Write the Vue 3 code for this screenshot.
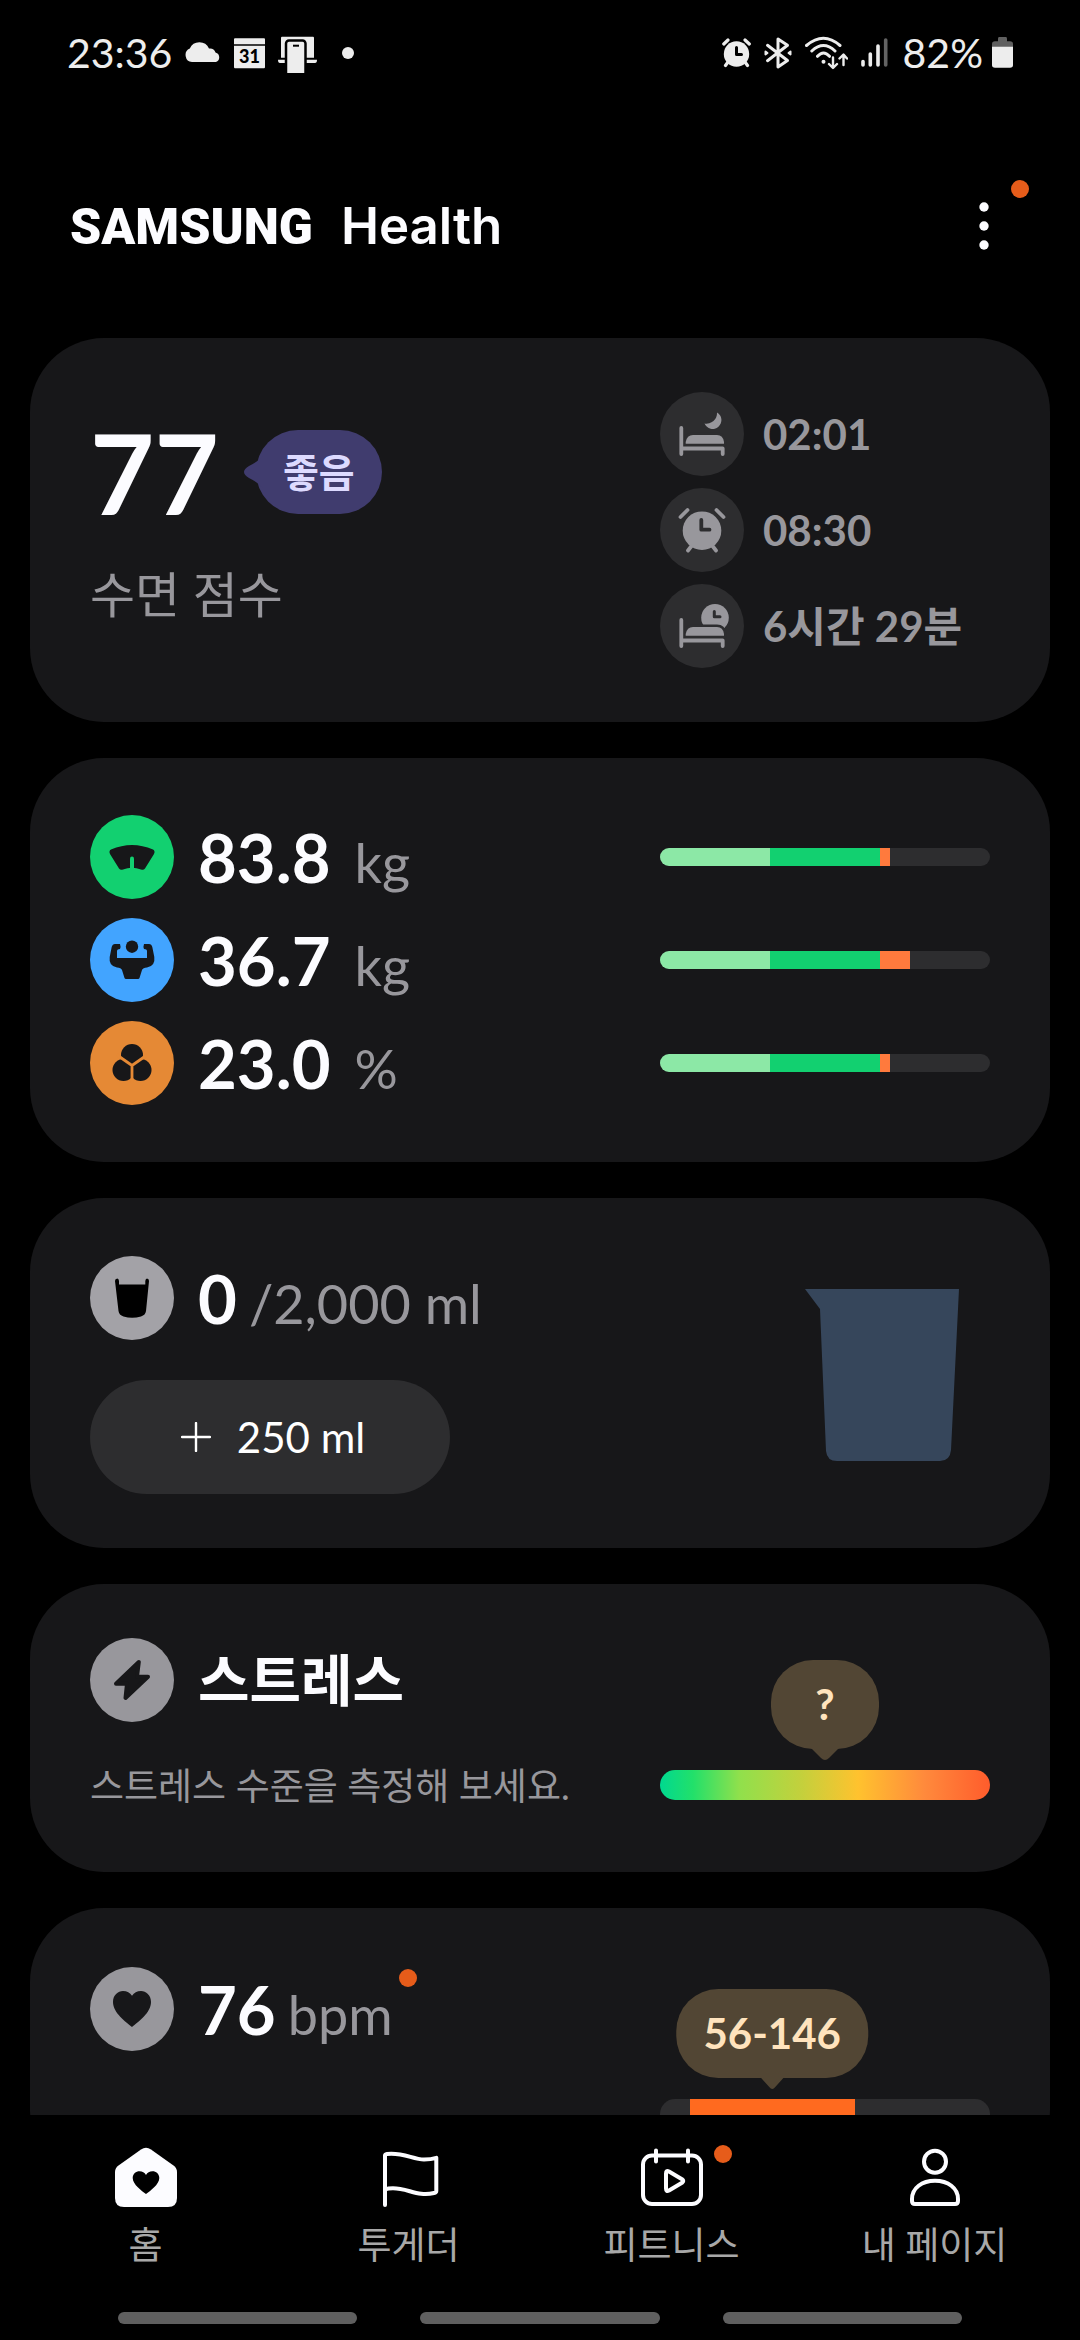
<template>
  <div class="screen" lang="ko">
    <div class="status-bar">
      <div class="status-group">
        <span class="status-text">23:36</span>
        <svg width="36" height="40" viewBox="0 0 36 40" fill="#ededed">
          <path d="M7 29A7 7 0 0 1 4.800 15.600A10.500 10.500 0 0 1 24 15.500A6 6 0 0 1 30.500 19.500A5 5 0 0 1 31 29Z" />
        </svg>
        <svg width="31" height="40" viewBox="0 0 31 40" fill="#ededed">
          <path d="M1 5.300H30Q31 5.300 31 6.300V11.300H0V6.300Q0 5.300 1 5.300ZM0 12.700H31V34Q31 35.300 30 35.300H1Q0 35.300 0 34Z" />
          <text x="15.500" y="30" text-anchor="middle" class="calendar-day">31</text>
        </svg>
        <svg width="39" height="40" viewBox="0 0 39 40" fill="#ededed">
          <path d="M4 3.700H35Q36 3.700 36 5V24.700H3V5Q3 3.700 4 3.700ZM0 26.700H7V30H2Q0 30 0 26.700ZM28 26.700H39Q39 30 37 30H28Z" />
          <rect x="8" y="7.500" width="19.500" height="36" rx="3" stroke="#000" stroke-width="2.500" />
          <path d="M15 12.700H21" stroke="#000" stroke-width="2" />
        </svg>
        <span class="status-more"></span>
      </div>

      <div class="status-group">
        <svg width="29" height="40" viewBox="0 0 29 40" stroke-linecap="round" stroke-linejoin="round">
          <circle cx="14.500" cy="21" r="12.700" fill="#ededed" />
          <path d="M1.800 11L6 7M23 7L27.300 11M6 29L3.500 32.500M23 29L25.500 32.500" fill="none" stroke="#ededed" stroke-width="3.200" />
          <path d="M14.500 14.500V21.500H19.500" fill="none" stroke="#000" stroke-width="3" />
        </svg>
        <svg width="28" height="40" viewBox="0 0 28 40" fill="none" stroke="#ededed" stroke-width="3" stroke-linecap="round" stroke-linejoin="round">
          <path d="M3.500 12.300L23.500 27.500L14 34V6L23.500 12.300L3.500 27.700" />
          <path d="M1.500 18.500L3.500 20L1.500 21.500ZM26.500 18.500L24.500 20L26.500 21.500Z" stroke-width="2" />
        </svg>
        <svg width="43" height="40" viewBox="0 0 43 40" fill="none" stroke="#ededed" stroke-width="3" stroke-linecap="round" stroke-linejoin="round">
          <path d="M1.500 12.500Q18.500 -2 35 12.500M6.800 18Q18.500 7 30 18M12.500 23.300Q18.500 16.500 24.500 23.300" />
          <circle cx="18.500" cy="28.700" r="2" fill="#ededed" stroke="none" />
          <path d="M28 24.500V34.500M24 31L28 35L32 31M38.500 32V22M34.500 25.500L38.500 21.500L42 25.500" stroke-width="2.400" />
        </svg>
        <svg width="27" height="40" viewBox="0 0 27 40" stroke="#ededed" stroke-width="3.600" stroke-linecap="round">
          <path d="M2 28.500V32M9.300 21V32M17 13V32" />
          <path d="M24.700 7V32" stroke="#636363" />
        </svg>
        <div class="battery">
          <span class="status-text">82%</span>
          <svg width="21" height="40" viewBox="0 0 21 40">
            <path d="M7 4H14Q15 4 15 6V8.300H18Q21 8.300 21 11V15H0V11Q0 8.300 3 8.300H6V6Q6 4 7 4Z" fill="#606060" />
            <path d="M0 13.700H21V32Q21 34.700 18 34.700H3Q0 34.700 0 32Z" fill="#ededed" />
          </svg>
        </div>
      </div>
    </div>

    <header class="app-header">
      <h1 class="app-title">
        <span class="brand">SAMSUNG</span>
        <span class="product">Health</span>
      </h1>
      <button class="btn-menu" aria-label="더보기">
        <svg width="10" height="50" viewBox="0 0 10 50" fill="#fcfcff">
          <circle cx="5" cy="6" r="4.700" />
          <circle cx="5" cy="25" r="4.700" />
          <circle cx="5" cy="44" r="4.700" />
        </svg>
        <span class="dot menu-dot"></span>
      </button>
    </header>

    <main class="card-list">
      <section class="card sleep-card">
        <div class="sleep-summary">
          <div class="sleep-score">
            <span class="score">77</span>
            <span class="score-badge">
              <svg class="badge-tail" width="20" height="32" viewBox="0 0 20 32" fill="#403c6e">
                <path d="M20 0Q16 5 6 10Q-4 16 6 22Q16 27 20 32Z" />
              </svg>
              좋음
            </span>
          </div>
          <div class="score-label">수면 점수</div>
        </div>
        <ul class="sleep-times">
          <li v-for="item in sleepTimes" :key="item.icon">
            <span class="icon-circle icon-dark">
              <svg width="84" height="84" viewBox="0 0 84 84" fill="#98979c" stroke-linecap="round" stroke-linejoin="round">
                <template v-if="item.icon === 'alarm'">
                  <circle cx="42" cy="42.700" r="19.300" />
                  <path d="M20.500 29L27.500 22M56.500 22L63.500 29M31.500 58L28 62.500M52.500 58L56 62.500" stroke="#98979c" stroke-width="3.800" />
                  <path d="M41.300 32V41.700H49.500" fill="none" stroke="#2d2d2f" stroke-width="3.800" />
                </template>
                <template v-else>
                  <path v-if="item.icon === 'bed'" d="M57 20.500A8.800 8.800 0 1 1 44.500 31.500A10.500 10.500 0 0 0 57 20.500Z" />
                  <template v-else>
                    <circle cx="55" cy="33.700" r="13.800" />
                    <path d="M54.300 27.500V32.700H60" fill="none" stroke="#2d2d2f" stroke-width="3" />
                  </template>
                  <path d="M25.700 51.700V50Q27 43 33 43H57Q63 43 64 50V51.700Z" stroke="#2d2d2f" stroke-width="5" paint-order="stroke" />
                  <path d="M21.300 36V62M21.300 56.500H62.700V62" fill="none" stroke="#98979c" stroke-width="3.800" />
                </template>
              </svg>
            </span>
            {{ item.text }}
          </li>
        </ul>
      </section>

      <section class="card body-card">
        <div v-for="item in bodyItems" :key="item.icon" class="body-row">
          <div class="metric">
            <span class="icon-circle" :class="`icon-${item.icon}`">
              <svg width="84" height="84" viewBox="0 0 84 84" fill="#171719">
                <template v-if="item.icon === 'weight'">
                  <path d="M21 34.500Q42 25.500 63 34.500Q65.500 36 64 39L55 53.500Q53.500 55.500 51 54.500Q42 51 33 54.500Q30.500 55.500 29 53.500L20 39Q18.500 36 21 34.500Z" />
                  <path d="M42 43.500V54" stroke="#12d070" stroke-width="4" stroke-linecap="round" />
                </template>
                <template v-else-if="item.icon === 'muscle'">
                  <circle cx="42" cy="28.700" r="6.200" />
                  <path d="M25 26H30Q31 28.500 30 31Q26.500 31 27 34V40H57V34Q57.500 31 54 31Q53 28.500 54 26H59Q61.500 26 62.300 29L64.300 39Q65.500 48 57 49.500Q53 49.500 52 52L49.500 60Q49.200 61 48 61H36Q34.800 61 34.500 60L32 52Q31 49.500 27 49.500Q18.500 48 19.700 39L21.700 29Q22.500 26 25 26Z" />
                </template>
                <template v-else>
                  <circle cx="42" cy="34" r="11" />
                  <circle cx="33.500" cy="49" r="11" />
                  <circle cx="50.500" cy="49" r="11" />
                  <path d="M27 34L42 44.500L57 34M42 44.500V62" fill="none" stroke="#e58935" stroke-width="2.800" />
                </template>
              </svg>
            </span>
            <span class="metric-value">{{ item.value }}</span>
            <span class="metric-unit body-unit">{{ item.unit }}</span>
          </div>
          <div class="level-bar">
            <span class="level-low"></span>
            <span class="level-normal"></span>
            <span class="level-over" :style="{ width: item.over + '%' }"></span>
          </div>
        </div>
      </section>

      <section class="card water-card">
        <div>
          <div class="metric">
            <span class="icon-circle icon-water">
              <svg width="84" height="84" viewBox="0 0 84 84">
                <path d="M25 25Q25 22.500 27.300 22.500Q28.800 22.500 29 25V28.500H55.300V25Q55.500 22.500 57 22.500Q59 22.500 59 25L56 55Q55.500 59 51 60.500Q42 63 33.500 60.500Q29 59 28.500 55Z" />
              </svg>
            </span>
            <span class="metric-value">0</span>
            <span class="metric-unit">/2,000 ml</span>
          </div>
          <button class="btn-add">
            <svg width="30" height="30" viewBox="0 0 30 30" stroke="#fff" stroke-width="2.400" stroke-linecap="round">
              <path d="M15 1V29M1 15H29" />
            </svg>
            250 ml
          </button>
        </div>
        <svg class="cup" width="154" height="172" viewBox="0 0 154 172" fill="#36465b">
          <path d="M0 0H154L146 161Q145 172 135 172H32Q22 172 21 162L15 20Z" />
        </svg>
      </section>

      <section class="card stress-card">
        <div>
          <div class="metric">
            <span class="icon-circle icon-gray">
              <svg width="84" height="84" viewBox="0 0 84 84" fill="#171719" stroke="#171719" stroke-width="4" stroke-linejoin="round">
                <path d="M48.800 24L47 38.700H58L35.500 60L37 45.700H26Z" />
              </svg>
            </span>
            <h2 class="card-name">스트레스</h2>
          </div>
          <p class="card-desc">스트레스 수준을 측정해 보세요.</p>
        </div>
        <div class="gauge">
          <span class="bubble bubble-unknown">
            ?
            <svg class="bubble-tail" width="30" height="14" viewBox="0 0 30 14" fill="#524634">
              <path d="M1 0H29L19 10Q15 14 11 10Z" />
            </svg>
          </span>
          <div class="gauge-bar gauge-stress"></div>
        </div>
      </section>

      <section class="card heart-card">
        <div class="metric">
          <span class="icon-circle icon-gray">
            <svg width="84" height="84" viewBox="0 0 84 84" fill="#171719">
              <path d="M42 60C36 55 23 46 23 35C23 28 28 24 33 24C37 24 40 26 42 28.700C44 26 47 24 51 24C56 24 61 28 61 35C61 46 48 55 42 60Z" />
            </svg>
          </span>
          <span class="metric-value">76</span>
          <span class="metric-unit heart-unit">bpm<span class="dot heart-dot"></span></span>
        </div>
        <div class="gauge">
          <span class="bubble" :style="{ left: heartRange.start + heartRange.width / 2 + '%' }">
            56-146
            <svg class="bubble-tail" width="30" height="14" viewBox="0 0 30 14" fill="#524634">
              <path d="M3 0H27L18 10Q15 14 12 10Z" />
            </svg>
          </span>
          <div class="gauge-bar">
            <span class="gauge-range" :style="{ marginLeft: heartRange.start + '%', width: heartRange.width + '%' }"></span>
          </div>
        </div>
      </section>
    </main>

    <nav class="bottom-nav">
      <div class="nav-items">
        <a href="#home" class="nav-item">
          <svg width="64" height="64" viewBox="0 0 64 64">
            <path d="M27 3.500Q32 0 37 3.500L59.500 19.500Q63 22 63 26V52Q63 61 54 61H10Q1 61 1 52V26Q1 22 4.500 19.500Z" fill="#fcfcff" />
            <path d="M32 48C28 45 18.700 38.500 18.700 32C18.700 28 22 25.300 25.500 25.300C28.500 25.300 30.500 26.500 32 29C33.500 26.500 35.500 25.300 38.500 25.300C42 25.300 45.300 28 45.300 32C45.300 38.500 36 45 32 48Z" />
          </svg>
          홈
        </a>
        <a href="#together" class="nav-item">
          <svg class="line-icon" width="64" height="64" viewBox="0 0 64 64">
            <path d="M8 59V9.500Q8 8.200 10 7.900C26 6 36 13.500 47 13.500Q54 13.500 59.300 11.900V45Q59.300 46.500 57 47C41 51 31 42.300 16 42.300Q11 42.300 8 43.500" />
          </svg>
          투게더
        </a>
        <a href="#fitness" class="nav-item">
          <svg class="line-icon" width="64" height="64" viewBox="0 0 64 64">
            <rect x="3" y="9.500" width="58" height="48.500" rx="9" />
            <path d="M16 4.500V15.500M48 4.500V15.500" />
            <path d="M26 27.500V42.500Q26 46 29 44.500L42 36.800Q44.500 35 42 33.200L29 25.500Q26 24 26 27.500Z" />
          </svg>
          <span class="dot nav-dot"></span>
          피트니스
        </a>
        <a href="#mypage" class="nav-item">
          <svg class="line-icon" width="64" height="64" viewBox="0 0 64 64">
            <circle cx="32" cy="15.700" r="11" />
            <path d="M9 53C9 42 19 34.700 32 34.700S55 42 55 53V55Q55 58 52 58H12Q9 58 9 55Z" />
          </svg>
          내 페이지
        </a>
      </div>
      <div class="gesture-hints">
        <span></span>
        <span></span>
        <span></span>
      </div>
    </nav>
  </div>
</template>

<script setup>
const sleepTimes = [
  { icon: 'bed', text: '02:01' },
  { icon: 'alarm', text: '08:30' },
  { icon: 'duration', text: '6시간 29분' }
];

// over: 표준 구간을 넘은 비율 (%)
const bodyItems = [
  { icon: 'weight', value: '83.8', unit: 'kg', over: 3 },
  { icon: 'muscle', value: '36.7', unit: 'kg', over: 9 },
  { icon: 'fat', value: '23.0', unit: '%', over: 3 }
];

const heartRange = { start: 9, width: 50 };
</script>

<style>
body {
  margin: 0;
  background: #000;
}
</style>

<style scoped>
.screen {
  display: flex;
  flex-direction: column;
  height: 100vh;
  overflow: hidden;
  background: #000;
  color: #fcfcff;
  font-family: Lato, "Noto Sans CJK KR", sans-serif;
}

.screen * {
  box-sizing: border-box;
}

svg {
  display: block;
  flex: none;
}

.dot {
  position: absolute;
  width: 18px;
  height: 18px;
  border-radius: 50%;
  background: #e65c1a;
}

/* 상태 표시줄 */
.status-bar {
  display: flex;
  flex: none;
  justify-content: space-between;
  align-items: center;
  height: 106px;
  padding: 0 67px;
  color: #ededed;
}

.status-group {
  display: flex;
  align-items: center;
  gap: 13px;
}

.status-text {
  font-size: 41px;
  line-height: 48px;
}

.status-more {
  width: 12px;
  height: 12px;
  margin-left: 12px;
  border-radius: 50%;
  background: #ededed;
}

.calendar-day {
  font-size: 18px;
  font-weight: 900;
  fill: #000;
}

.battery {
  display: flex;
  align-items: center;
  gap: 9px;
  margin-left: 2px;
}

/* 헤더 */
.app-header {
  display: flex;
  flex: none;
  justify-content: space-between;
  align-items: center;
  height: 232px;
  padding: 8px 72px 0 70px;
}

.app-title {
  display: flex;
  align-items: baseline;
  gap: 28px;
  margin: 0;
  line-height: 60px;
}

.brand {
  font-family: Roboto, sans-serif;
  font-size: 50px;
  font-weight: 900;
}

.product {
  font-family: Inter, sans-serif;
  font-size: 51px;
  font-weight: 600;
}

.btn-menu {
  position: relative;
  display: flex;
  justify-content: center;
  width: 48px;
  padding: 0;
  border: 0;
  background: none;
  cursor: pointer;
}

.menu-dot {
  top: -21px;
  right: -21px;
}

/* 카드 */
.card-list {
  display: flex;
  flex: 1;
  flex-direction: column;
  gap: 36px;
  min-height: 0;
  padding: 0 30px;
  overflow: hidden;
}

.card {
  display: grid;
  flex: none;
  grid-template-columns: 1fr 330px;
  padding: 54px 60px;
  border-radius: 74px;
  background: #171719;
}

.icon-circle {
  flex: none;
  width: 84px;
  height: 84px;
  border-radius: 50%;
}

.icon-dark {
  background: #2d2d2f;
}

.icon-weight {
  background: #12d070;
}

.icon-muscle {
  background: #42a4ff;
}

.icon-fat {
  background: #e58935;
}

.icon-water {
  background: #a3a2a7;
}

.icon-gray {
  background: #98979c;
}

.metric {
  display: flex;
  align-items: baseline;
  height: 84px;
  line-height: 84px;
}

.metric .icon-circle {
  align-self: center;
  margin-right: 24px;
}

.metric-value {
  font-size: 67px;
  font-weight: 700;
}

.metric-unit {
  margin-left: 12px;
  color: #98979c;
  font-size: 54px;
}

.body-unit {
  margin-left: 24px;
}

/* 수면 */
.sleep-card {
  align-items: center;
}

.sleep-score {
  display: flex;
  align-items: center;
  gap: 37px;
  height: 84px;
}

.score {
  font-size: 111px;
  font-weight: 700;
  line-height: 80px;
}

.score-badge {
  position: relative;
  width: 126px;
  height: 84px;
  border-radius: 42px;
  background: #403c6e;
  color: #dddaff;
  font-size: 39px;
  font-weight: 700;
  line-height: 84px;
  text-align: center;
}

.badge-tail {
  position: absolute;
  top: 26px;
  left: -13px;
}

.score-label {
  margin-top: 44px;
  color: #98979c;
  font-size: 49px;
  line-height: 72px;
}

.sleep-times {
  display: flex;
  flex-direction: column;
  gap: 12px;
  margin: 0;
  padding: 0;
  list-style: none;
}

.sleep-times li {
  display: flex;
  align-items: center;
  gap: 19px;
  height: 84px;
  color: #98979c;
  font-size: 42px;
  font-weight: 700;
  line-height: 84px;
  white-space: nowrap;
}

/* 체성분 */
.body-card {
  row-gap: 19px;
  padding: 57px 60px;
}

.body-row {
  display: grid;
  grid-column: 1 / -1;
  grid-template-columns: subgrid;
  align-items: center;
}

.level-bar {
  display: flex;
  height: 18px;
  overflow: hidden;
  border-radius: 9px;
  background: #2d2d2f;
}

.level-low,
.level-normal {
  width: 33.333%;
}

.level-low {
  background: #8ce8a6;
}

.level-normal {
  background: #12d070;
}

.level-over {
  background: #ff7a3d;
}

/* 물 */
.water-card {
  align-items: center;
  padding-top: 58px;
}

.btn-add {
  display: flex;
  justify-content: center;
  align-items: center;
  gap: 26px;
  width: 360px;
  height: 114px;
  margin-top: 40px;
  padding: 0 0 0 6px;
  border: 0;
  border-radius: 57px;
  background: #2d2d2f;
  color: #fff;
  font-family: inherit;
  font-size: 42px;
  cursor: pointer;
}

.cup {
  justify-self: end;
  margin-right: 31px;
}

/* 스트레스, 심박수 */
.stress-card {
  padding-bottom: 62px;
}

.card-name {
  margin: 0;
  font-size: 56px;
  font-weight: 700;
  line-height: 84px;
}

.card-desc {
  margin: 40px 0 0;
  color: #98979c;
  font-size: 37px;
  line-height: 48px;
}

.gauge {
  position: relative;
  margin-top: 22px;
  padding-top: 110px;
}

.bubble {
  position: absolute;
  top: 0;
  left: 50%;
  height: 89px;
  padding: 0 27px;
  border-radius: 42px;
  background: #524634;
  color: #ffe3bd;
  font-size: 42px;
  font-weight: 700;
  line-height: 89px;
  text-align: center;
  transform: translateX(-50%);
}

.bubble-unknown {
  width: 108px;
}

.bubble-tail {
  position: absolute;
  top: 88px;
  left: calc(50% - 15px);
}

.gauge-bar {
  display: flex;
  height: 30px;
  overflow: hidden;
  border-radius: 15px;
  background: #2d2d2f;
}

.gauge-stress {
  background: linear-gradient(90deg, #00d890, #22e06a 10%, #90e04c 24%, #c4d03c 43%, #ffc22e 60%, #ff8a3c 80%, #ff5c2c);
}

.gauge-range {
  background: #ff6a1f;
}

.heart-card {
  padding-top: 59px;
}

.heart-unit {
  position: relative;
}

.heart-dot {
  top: -4px;
  right: -24px;
}

/* 하단 메뉴 */
.bottom-nav {
  flex: none;
  padding: 31px 14px 16px;
  background: #000;
}

.nav-items {
  display: grid;
  grid-template-columns: repeat(4, 1fr);
}

.nav-item {
  position: relative;
  display: flex;
  flex-direction: column;
  align-items: center;
  gap: 11px;
  color: #a8a8a8;
  font-size: 37px;
  line-height: 48px;
  text-decoration: none;
}

.line-icon {
  fill: none;
  stroke: #fcfcff;
  stroke-width: 4;
  stroke-linecap: round;
  stroke-linejoin: round;
}

.nav-dot {
  top: -1px;
  left: calc(50% + 42px);
}

.gesture-hints {
  display: flex;
  justify-content: space-between;
  gap: 63px;
  margin-top: 43px;
  padding: 0 104px;
}

.gesture-hints span {
  flex: 1;
  height: 12px;
  border-radius: 6px;
  background: #5f5f5f;
}
</style>
